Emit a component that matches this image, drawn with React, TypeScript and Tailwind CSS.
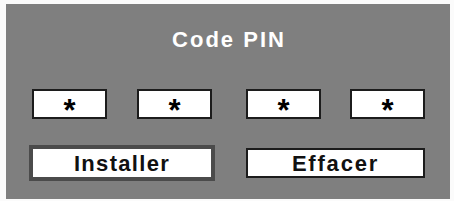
const PIN = ['*', '*', '*', '*'];

function PinBox({ value }: { value: string }) {
  return (
    <div className="w-[75px] h-[30px] bg-white border-2 border-[#1c1c1c] flex items-center justify-center">
      <span className="text-[31px] leading-[31px] font-bold text-black translate-y-[6px]">{value}</span>
    </div>
  );
}

export default function App() {
  return (
    <div className="w-[454px] h-[201px] bg-[#fbfbfb] pt-[4px] pl-[6px]" style={{ fontFamily: '"Liberation Sans", Arial, sans-serif' }}>
      <div className="w-[444px] h-[195px] bg-[#7f7f7f] flex flex-col items-center">
        <div className="pt-[24px] h-[52px] text-[22px] leading-[24px] font-bold tracking-[2px] text-white pl-[2px]">
          Code PIN
        </div>

        <div className="mt-[33px] flex gap-[34px] pl-[1px]">
          <div className="w-[180px] flex justify-between">
            <PinBox value={PIN[0]} />
            <PinBox value={PIN[1]} />
          </div>
          <div className="w-[179px] flex justify-between">
            <PinBox value={PIN[2]} />
            <PinBox value={PIN[3]} />
          </div>
        </div>

        <div className="mt-[29px] flex gap-[34px] pl-[1px]">
          <div className="w-[180px] h-[30px] flex justify-center items-center">
            <button className="w-[186px] h-[36px] shrink-0 bg-white border-4 border-[#4b4b4b] flex items-center justify-center text-[22px] font-bold tracking-[1.3px] text-[#111]">
              Installer
            </button>
          </div>
          <button className="w-[179px] h-[30px] bg-white border-2 border-[#1c1c1c] flex items-center justify-center text-[22px] font-bold tracking-[1.8px] text-[#111]">
            Effacer
          </button>
        </div>
      </div>
    </div>
  );
}
